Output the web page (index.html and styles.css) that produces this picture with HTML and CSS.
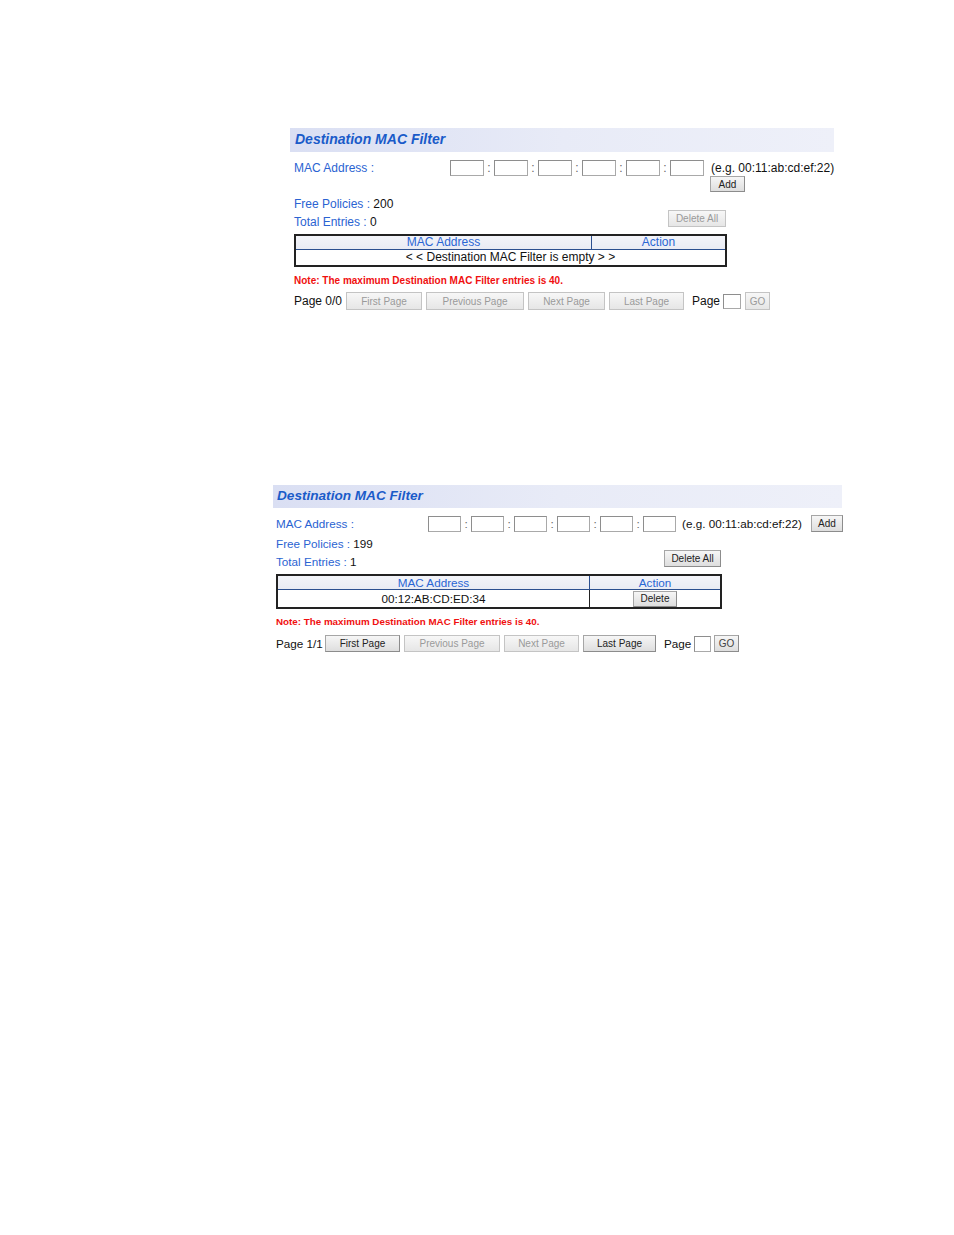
FILE: index.html
```html
<!DOCTYPE html>
<html>
<head>
<meta charset="utf-8">
<link rel="stylesheet" href="styles.css">
</head>
<body>
<div class="panel p1">
  <div class="hdr">Destination MAC Filter</div>
  <div class="body">
    <div class="mac-row">
      <span class="lbl mac-lbl">MAC Address :</span>
      <span class="octets">
        <span class="oct"></span><span class="sep">:</span>
        <span class="oct"></span><span class="sep">:</span>
        <span class="oct"></span><span class="sep">:</span>
        <span class="oct"></span><span class="sep">:</span>
        <span class="oct"></span><span class="sep">:</span>
        <span class="oct"></span>
      </span>
      <span class="aside">
        <span class="eg">(e.g. 00:11:ab:cd:ef:22)</span>
        <span class="btn add">Add</span>
      </span>
    </div>
    <div class="info">
      <div class="info-left">
        <div class="line"><span class="lbl">Free Policies : </span><span class="val">200</span></div>
        <div class="line"><span class="lbl">Total Entries : </span><span class="val">0</span></div>
      </div>
      <span class="btn dis delall">Delete All</span>
    </div>
    <table class="tbl">
      <tr><th class="c-mac">MAC Address</th><th class="c-act">Action</th></tr>
      <tr><td colspan="2" class="empty">&lt; &lt; Destination MAC Filter is empty &gt; &gt;</td></tr>
    </table>
    <div class="note">Note: The maximum Destination MAC Filter entries is 40.</div>
    <div class="pager">
      <span class="pg">Page 0/0</span>
      <span class="btn dis b-first">First Page</span>
      <span class="btn dis b-prev">Previous Page</span>
      <span class="btn dis b-next">Next Page</span>
      <span class="btn dis b-last">Last Page</span>
      <span class="pg pg2">Page</span>
      <span class="oct pin"></span>
      <span class="btn dis b-go">GO</span>
    </div>
  </div>
</div>

<div class="panel p2">
  <div class="hdr">Destination MAC Filter</div>
  <div class="body">
    <div class="mac-row">
      <span class="lbl mac-lbl">MAC Address :</span>
      <span class="octets">
        <span class="oct"></span><span class="sep">:</span>
        <span class="oct"></span><span class="sep">:</span>
        <span class="oct"></span><span class="sep">:</span>
        <span class="oct"></span><span class="sep">:</span>
        <span class="oct"></span><span class="sep">:</span>
        <span class="oct"></span>
      </span>
      <span class="eg">(e.g. 00:11:ab:cd:ef:22)</span>
      <span class="btn add">Add</span>
    </div>
    <div class="info">
      <div class="info-left">
        <div class="line"><span class="lbl">Free Policies : </span><span class="val">199</span></div>
        <div class="line"><span class="lbl">Total Entries : </span><span class="val">1</span></div>
      </div>
      <span class="btn delall">Delete All</span>
    </div>
    <table class="tbl">
      <tr><th class="c-mac">MAC Address</th><th class="c-act">Action</th></tr>
      <tr><td class="mac">00:12:AB:CD:ED:34</td><td class="act"><span class="btn del">Delete</span></td></tr>
    </table>
    <div class="note">Note: The maximum Destination MAC Filter entries is 40.</div>
    <div class="pager">
      <span class="pg">Page 1/1</span>
      <span class="btn b-first">First Page</span>
      <span class="btn dis b-prev">Previous Page</span>
      <span class="btn dis b-next">Next Page</span>
      <span class="btn b-last">Last Page</span>
      <span class="pg pg2">Page</span>
      <span class="oct pin"></span>
      <span class="btn go2 b-go">GO</span>
    </div>
  </div>
</div>
</body>
</html>
```

FILE: styles.css
```css
html, body {
  margin: 0;
  padding: 0;
  background: #ffffff;
}
body {
  font-family: "Liberation Sans", Arial, sans-serif;
  font-size: 12px;
  color: #111;
  width: 954px;
  height: 1235px;
  overflow: hidden;
}
.panel {
  display: flex;
  flex-direction: column;
}
.hdr {
  background: linear-gradient(to right, #dadff3, #e8ebf7 50%, #eef0f9);
  color: #1a5bc9;
  font-weight: bold;
  font-style: italic;
  box-sizing: border-box;
}
.lbl { color: #2a63d2; }
.val { color: #111; }

.mac-row {
  display: flex;
  align-items: flex-start;
  white-space: nowrap;
}
.octets {
  display: flex;
  align-items: center;
  flex-shrink: 0;
}
.oct {
  display: inline-block;
  box-sizing: border-box;
  width: 34px;
  height: 16px;
  border: 1px solid #a9a9a9;
  border-top-color: #8e8e8e;
  border-left-color: #8e8e8e;
  background: #fff;
  flex-shrink: 0;
}
.sep {
  display: inline-block;
  width: 10px;
  text-align: center;
  color: #666;
}
.aside {
  display: flex;
  flex-direction: column;
  align-items: flex-start;
}
.btn {
  display: inline-flex;
  align-items: center;
  justify-content: center;
  box-sizing: border-box;
  font-size: 10px;
  color: #222;
  background: linear-gradient(#f6f6f6, #dedede);
  border: 1px solid #a6a6a6;
  border-right-color: #8c8c8c;
  border-bottom-color: #8c8c8c;
  white-space: nowrap;
  flex-shrink: 0;
}
.btn.dis {
  color: #9a9a9a;
  border-color: #c4c4c4;
  background: linear-gradient(#f7f7f7, #e6e6e6);
}
.info {
  display: flex;
  justify-content: space-between;
  align-items: flex-start;
}
.line { line-height: 18px; height: 18px; white-space: nowrap; }
.tbl {
  border-collapse: collapse;
  border: 2px solid #222;
  box-sizing: border-box;
}
.tbl th {
  font-weight: normal;
  color: #2a66d4;
  background: linear-gradient(#f3f4f9, #e9ebf3);
  border: 1px solid #2b4f8f;
  padding: 0;
  text-align: center;
}
.tbl td {
  border: 1px solid #222;
  padding: 0;
  text-align: center;
  color: #111;
}
.note {
  color: #f01010;
  font-weight: bold;
  font-size: 10px;
  line-height: 14px;
  white-space: nowrap;
}
.pager {
  display: flex;
  align-items: center;
  white-space: nowrap;
}
.pg { color: #111; flex-shrink: 0; white-space: nowrap; }

/* ---------- panel 1 ---------- */
.p1 { margin: 128px 0 0 290px; width: 560px; }
.p1 .hdr {
  width: 544px;
  height: 24px;
  line-height: 22px;
  padding-left: 5px;
  font-size: 14px;
}
.p1 .body { padding-left: 4px; }
.p1 .mac-row { margin-top: 8px; }
.p1 .mac-lbl { width: 156px; line-height: 16px; flex-shrink: 0; }
.p1 .aside { margin-left: 7px; }
.p1 .eg { line-height: 16px; }
.p1 .add { width: 35px; height: 16px; margin-left: -1px; }
.p1 .info { width: 433px; margin-top: 3px; }
.p1 .delall { width: 58px; height: 17px; margin-top: 15px; margin-right: 1px; }
.p1 .tbl { width: 433px; margin-top: 3px; }
.p1 .tbl th { height: 13px; line-height: 13px; }
.p1 .tbl th.c-mac { width: 295px; }
.p1 .tbl td { height: 15px; line-height: 15px; }
.p1 .note { margin-top: 7px; }
.p1 .pager { margin-top: 4px; height: 18px; }
.p1 .pager .btn { height: 18px; margin-left: 4px; }
.p1 .pg { width: 48px; }
.p1 .b-first { width: 76px; }
.p1 .b-prev { width: 98px; }
.p1 .b-next { width: 77px; }
.p1 .b-last { width: 75px; }
.p1 .pg2 { width: 31px; margin-left: 8px; }
.p1 .pin { width: 18px; height: 15px; margin-left: 0; }
.p1 .b-go { width: 25px; }

/* ---------- panel 2 ---------- */
.p2 { margin: 175px 0 0 273px; width: 580px; font-size: 11.7px; }
.p2 .hdr {
  width: 569px;
  height: 23px;
  line-height: 21px;
  padding-left: 4px;
  font-size: 13.6px;
}
.p2 .body { padding-left: 3px; }
.p2 .mac-row { margin-top: 7px; align-items: center; height: 17px; }
.p2 .mac-lbl { width: 152px; line-height: 16px; flex-shrink: 0; }
.p2 .oct { width: 33px; }
.p2 .sep { width: 10px; }
.p2 .eg { margin-left: 6px; }
.p2 .add { width: 32px; height: 17px; margin-left: 9px; }
.p2 .info { width: 446px; margin-top: 3px; }
.p2 .delall { width: 57px; height: 17px; margin-top: 15px; margin-right: 1px; }
.p2 .tbl { width: 446px; margin-top: 3px; }
.p2 .tbl th { height: 13px; line-height: 13px; }
.p2 .tbl th.c-mac { width: 311px; }
.p2 .tbl td { height: 16px; line-height: 16px; }
.p2 .del { width: 44px; height: 16px; margin-top: 1px; }
.p2 .tbl td.act { vertical-align: top; }
.p2 .note { margin-top: 6px; font-size: 9.8px; }
.p2 .pager { margin-top: 6px; height: 17px; }
.p2 .pager .btn { height: 17px; margin-left: 4px; }
.p2 .pg { width: 45px; }
.p2 .b-first { width: 75px; }
.p2 .b-prev { width: 96px; }
.p2 .b-next { width: 75px; }
.p2 .b-last { width: 73px; }
.p2 .pg2 { width: 30px; margin-left: 8px; }
.p2 .pin { width: 17px; height: 16px; }
.p2 .b-go { width: 25px; margin-left: 3px !important; }
.p2 .go2 { color: #444; }
```
